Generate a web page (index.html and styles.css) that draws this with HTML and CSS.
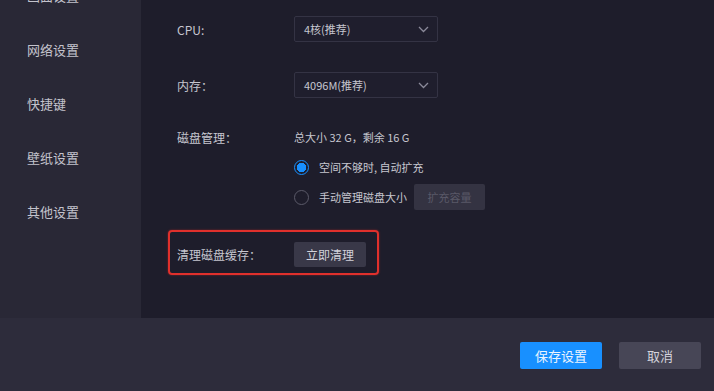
FILE: index.html
```html
<!DOCTYPE html>
<html lang="zh-CN">
<head>
<meta charset="utf-8">
<title>设置</title>
<link rel="stylesheet" href="styles.css">
</head>
<body>
<div class="app">
  <div class="top">
    <nav class="sidebar">
      <ul class="menu">
        <li>画面设置</li>
        <li>网络设置</li>
        <li>快捷键</li>
        <li>壁纸设置</li>
        <li>其他设置</li>
      </ul>
    </nav>
    <main class="content">
      <div class="row row-select">
        <span class="label">CPU:</span>
        <div class="select"><span>4核(推荐)</span><svg class="chev" width="11" height="7" viewBox="0 0 11 7"><path d="M1 1 L5.5 5.5 L10 1" fill="none" stroke="#8a8999" stroke-width="1.3"/></svg></div>
      </div>
      <div class="row row-select row-mem">
        <span class="label">内存：</span>
        <div class="select"><span>4096M(推荐)</span><svg class="chev" width="11" height="7" viewBox="0 0 11 7"><path d="M1 1 L5.5 5.5 L10 1" fill="none" stroke="#8a8999" stroke-width="1.3"/></svg></div>
      </div>
      <div class="row row-disk">
        <span class="label">磁盘管理：</span>
        <span class="value">总大小 32 G，剩余 16 G</span>
      </div>
      <div class="row row-radio1">
        <span class="label"></span>
        <label class="radio"><span class="dot on"></span>空间不够时, 自动扩充</label>
      </div>
      <div class="row row-radio2">
        <span class="label"></span>
        <label class="radio"><span class="dot"></span>手动管理磁盘大小</label>
        <button class="btn-disabled">扩充容量</button>
      </div>
      <div class="highlight">
        <span class="label">清理磁盘缓存：</span>
        <button class="btn-clean">立即清理</button>
      </div>
    </main>
  </div>
  <footer class="footer">
    <button class="btn-primary">保存设置</button>
    <button class="btn-cancel">取消</button>
  </footer>
</div>
</body>
</html>
```
FILE: styles.css
```css
* { box-sizing: border-box; margin: 0; padding: 0; }
html, body { width: 714px; height: 391px; overflow: hidden; }
body {
  background: #1e1d2b;
  font-family: "Noto Sans CJK SC", "Noto Sans", sans-serif;
  font-size: 12px;
  color: #c6c6cf;
}
.app { display: flex; flex-direction: column; height: 391px; }
.top { display: flex; height: 318px; }
.sidebar { width: 141px; background: #292836; overflow: hidden; flex-shrink: 0; }
.menu { list-style: none; margin-top: -32px; }
.menu li {
  height: 54px;
  display: flex;
  align-items: center;
  padding-left: 27px;
  font-size: 13px;
  color: #c3c3cc;
}
.content { flex: 1; background: #1e1d2b; padding: 16px 0 0 36px; }
.row { display: flex; align-items: center; }
.label { width: 117px; flex-shrink: 0; color: #c6c6cf; }
.select {
  width: 144px; height: 26px;
  border: 1px solid #343344;
  border-radius: 2px;
  background: #1f1e2d;
  display: flex; align-items: center; justify-content: space-between;
  padding: 0 8px 0 9px;
  font-size: 11px;
  color: #c6c6cf;
}
.chev { display: block; }
.row-mem { margin-top: 30px; }
.row-disk { margin-top: 29px; height: 20px; }
.value { color: #c6c6cf; font-size: 11px; }
.row-radio1 { margin-top: 10px; height: 20px; }
.row-radio2 { margin-top: 7px; height: 26px; }
.radio { display: flex; align-items: center; color: #c6c6cf; font-size: 11px; }
.dot {
  width: 15px; height: 15px; border-radius: 50%;
  border: 1.5px solid #5b5a69;
  margin-left: 0; margin-right: 10px;
  display: inline-block;
}
.dot.on {
  border-color: #1890ff;
  background: radial-gradient(circle, #1890ff 0 4.5px, #1e1d2b 5px);
}
.btn-disabled {
  margin-left: 7px;
  width: 71px; height: 26px;
  background: #343342; border: none; border-radius: 2px;
  color: #5a5968; font: inherit; font-size: 11px;
}
.highlight {
  margin-top: 20px; margin-left: -9px;
  width: 211px; height: 45px;
  border: 2px solid #e0302c;
  border-radius: 4px;
  display: flex; align-items: flex-start;
  padding: 10px 0 0 7px;
  box-shadow: 0 0 2px rgba(224, 48, 44, 0.6);
}
.highlight .label { line-height: 25px; }
.btn-clean {
  width: 72px; height: 25px;
  background: #393848; border: none; border-radius: 2px;
  color: #d2d2da; font: inherit;
}
.footer {
  height: 73px; background: #2d2c3b;
  display: flex; justify-content: flex-end; align-items: flex-start;
  padding: 24px 13px 0 0; gap: 17px;
}
.footer button {
  width: 82px; height: 27px; border: none; border-radius: 2px;
  font: inherit; font-size: 13px;
}
.btn-primary { background: #1890ff; color: #eaf4ff; }
.btn-cancel { background: #474656; color: #d4d4dc; }
```
